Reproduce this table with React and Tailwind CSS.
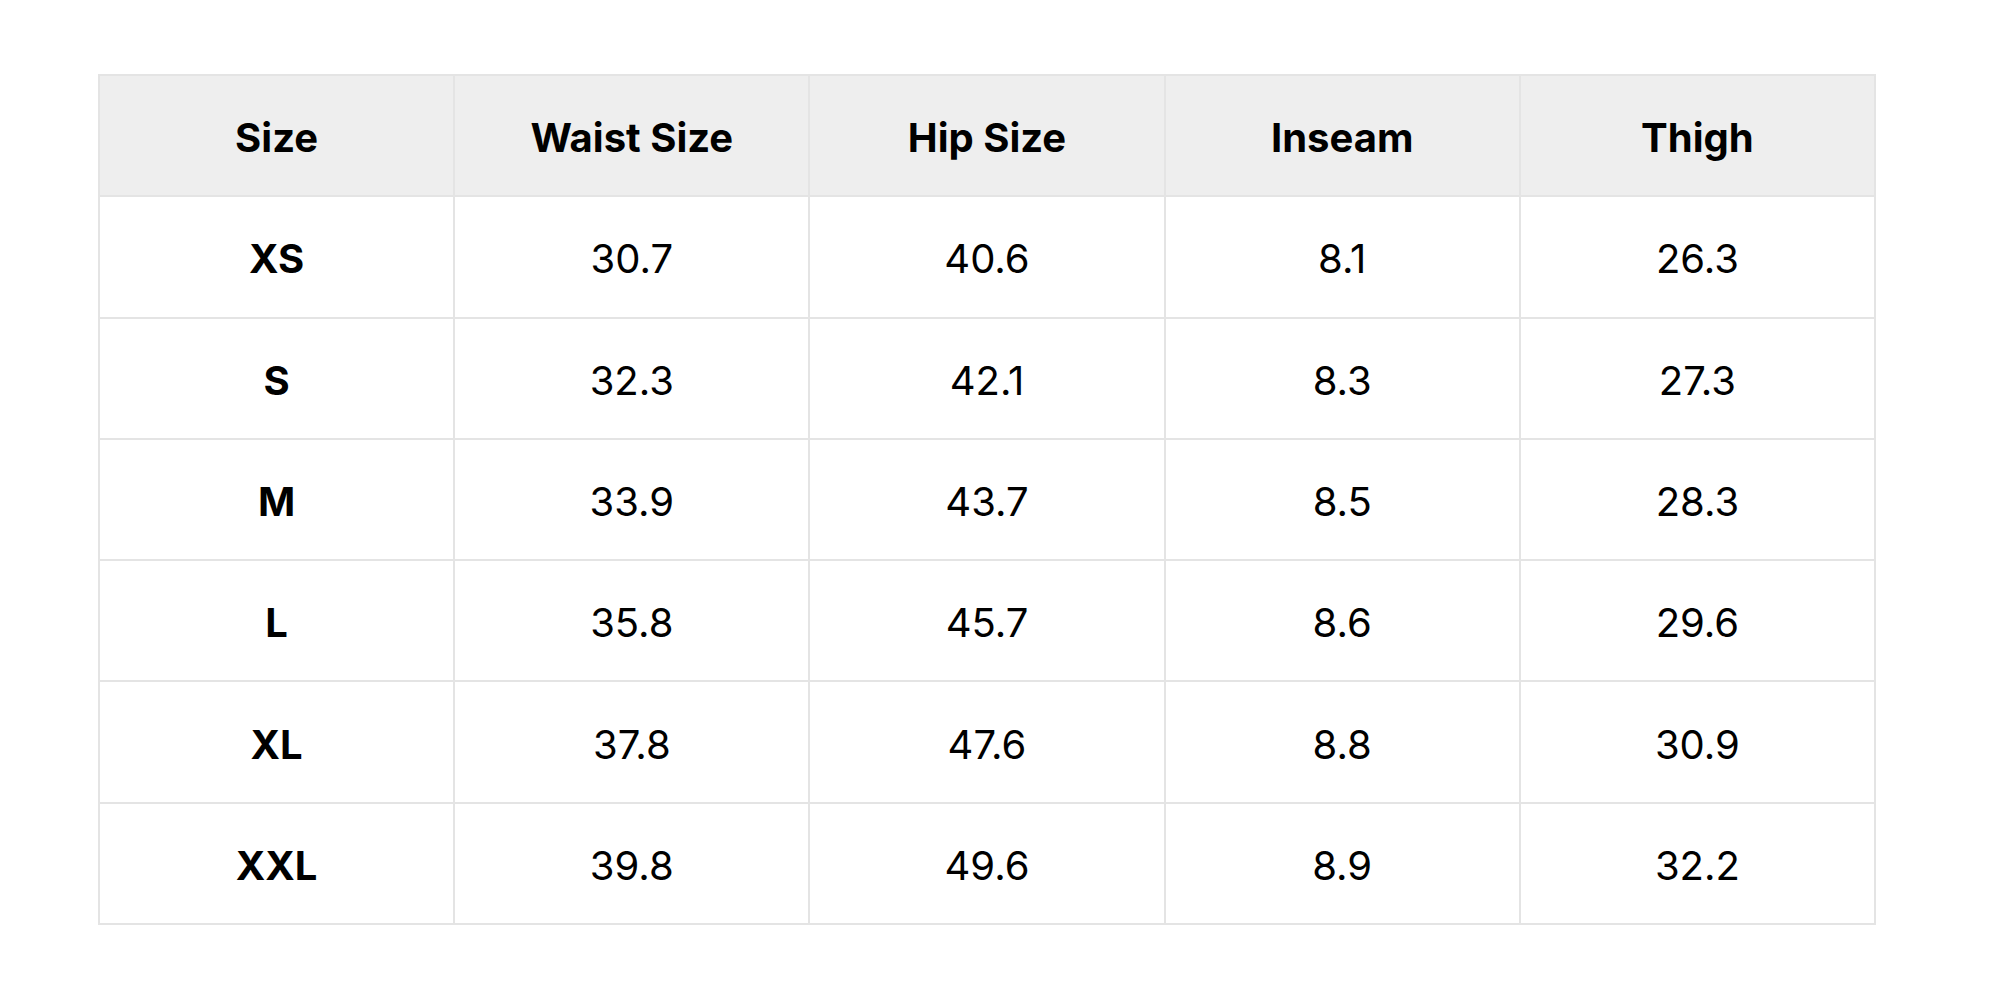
import React from "react";

const headers = ["Size", "Waist Size", "Hip Size", "Inseam", "Thigh"];
const rows = [
  ["XS", "30.7", "40.6", "8.1", "26.3"],
  ["S", "32.3", "42.1", "8.3", "27.3"],
  ["M", "33.9", "43.7", "8.5", "28.3"],
  ["L", "35.8", "45.7", "8.6", "29.6"],
  ["XL", "37.8", "47.6", "8.8", "30.9"],
  ["XXL", "39.8", "49.6", "8.9", "32.2"],
];

export default function App() {
  return (
    <div className="w-[2000px] h-[1000px] bg-white pt-[74px] pl-[98px] font-['Inter',sans-serif] text-black">
      <div className="grid grid-cols-5 gap-[2px] p-[2px] bg-[#e4e4e4] w-[1778px]">
        {headers.map((h) => (
          <div
            key={h}
            className="h-[119.3px] pt-[5px] bg-[#eeeeee] flex items-center justify-center text-[40px] font-bold"
          >
            {h}
          </div>
        ))}
        {rows.map((r) =>
          r.map((c, i) => (
            <div
              key={r[0] + i}
              className={
                i === 0
                  ? "h-[119.3px] pt-[5px] bg-white flex items-center justify-center text-[40px] font-bold"
                  : "h-[119.3px] pt-[5px] bg-white flex items-center justify-center text-[40px] font-normal"
              }
            >
              {c}
            </div>
          ))
        )}
      </div>
    </div>
  );
}
